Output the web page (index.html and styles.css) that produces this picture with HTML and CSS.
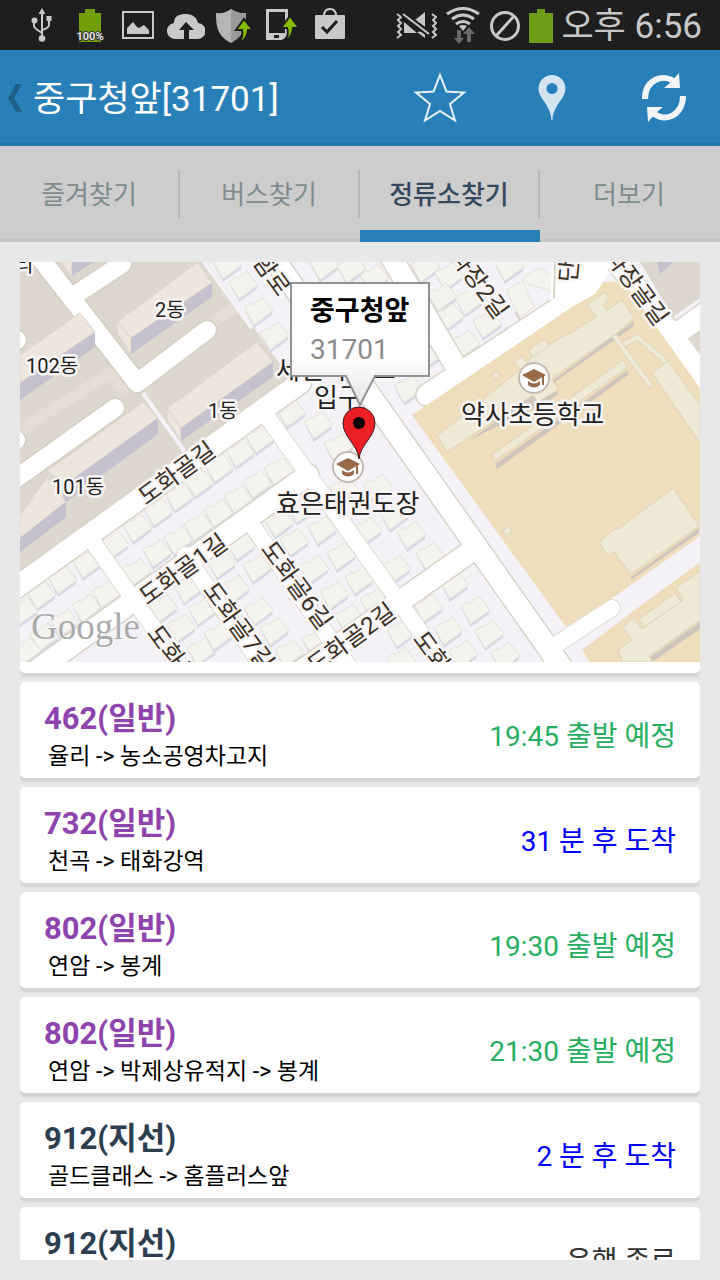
FILE: index.html
```html
<!DOCTYPE html>
<html lang="ko">
<head>
  <meta charset="UTF-8" />
  <meta name="viewport" content="width=device-width, initial-scale=1" />
  <title>중구청앞[31701]</title>
  <link rel="stylesheet" href="styles.css">
</head>
<body>
  <div class="statusbar">
    <div class="status-icons">
      <svg width="24" height="36" viewBox="0 0 24 36" fill="none" stroke="#c8c8c8" stroke-width="2">
        <path d="M12 5v26M4 14v5q0 2 8 7M19 12v6q0 3-7 5" />
        <path d="M12 1l3.500 6h-7zM16.500 9h5v5h-5z" fill="#c8c8c8" stroke="none" />
        <circle cx="4.500" cy="13.500" r="3" fill="#c8c8c8" stroke="none" />
        <circle cx="12" cy="31.500" r="3.300" fill="#c8c8c8" stroke="none" />
      </svg>
      <svg width="28" height="36" viewBox="0 0 28 36">
        <path d="M3 6h6V2h10v4h6v29H3z" fill="#709f09" />
        <text x="14" y="33" class="battery-text">100%</text>
      </svg>
      <svg width="32" height="36" viewBox="0 0 32 36">
        <rect x="1" y="5" width="30" height="26" fill="none" stroke="#c8c8c8" stroke-width="2" />
        <path d="M5 27v-6l6-6 4 5 2 1 5-3 5 5v4z" fill="#c8c8c8" />
      </svg>
      <svg width="38" height="36" viewBox="0 0 38 36">
        <path d="M9 32a8 8 0 0 1-2-16C7 9 12 7 19 7s11 4 12 9a8 8 0 0 1-1 16z" fill="#c8c8c8" />
        <path d="M19 15l8 8h-5v9h-5v-9h-5z" fill="#1e1e1e" />
      </svg>
      <svg width="38" height="38" viewBox="0 0 38 38">
        <path d="M16 3q7 5 15 4c0 16-3 23-15 30C3 30 1 22 1 7q9 1 15-4z" fill="#b5b5b5" />
        <path d="M16 3q7 5 15 4c0 16-3 23-15 30z" fill="#999" />
        <path d="M21 37q8-3 6-13h-6l8-11 9 11h-5q-1 12-12 13z" fill="#84bd00" stroke="#1e1e1e" stroke-width="2" />
      </svg>
      <svg width="34" height="36" viewBox="0 0 34 36">
        <path d="M1 2h22v31H1zM4 5v21h16V5zM9 28v3h5v-3z" fill="#c8c8c8" fill-rule="evenodd" />
        <path d="M17 34q8-3 5-13h-6l9-12 9 12h-6q-1 12-11 13z" fill="#84bd00" stroke="#1e1e1e" stroke-width="2" />
      </svg>
      <svg width="32" height="36" viewBox="0 0 32 36">
        <path d="M10 9q0-7 6-7t6 7" fill="none" stroke="#c8c8c8" stroke-width="2" />
        <rect x="1" y="8" width="30" height="24" rx="1" fill="#c8c8c8" />
        <path d="M8 20l5 5 10-11" fill="none" stroke="#1e1e1e" stroke-width="3" />
      </svg>
    </div>
    <div class="status-right">
      <svg width="42" height="36" viewBox="0 0 42 36" fill="none" stroke="#c8c8c8" stroke-width="2">
        <path d="M2 7l4 3-3 3 3 3-3 3 3 3-3 3 3 3-4 3M37 7l4 3-3 3 3 3-3 3 3 3-3 3 3 3-4 3" />
        <path d="M9 15l13 11H9zM20 13l10-8v15zM22 25l8-1v7z" fill="#c8c8c8" stroke="none" />
        <path d="M8 7l26 20" stroke="#1e1e1e" stroke-width="6" />
        <path d="M8 7l26 20" />
      </svg>
      <svg width="36" height="38" viewBox="0 0 36 38" fill="none" stroke="#c8c8c8" stroke-width="3">
        <path d="M2 8q16-11 32 0M7 13q11-8 22 0M11 18q7-5 14 0" />
        <path d="M14 20q4-2 8 0l-4 5z" fill="#c8c8c8" stroke="none" />
        <path d="M14 24v11M24 36V26" stroke="#6a6a6a" stroke-width="4" />
        <path d="M9 32h10l-5 6zM18 28h12l-6-7z" fill="#6a6a6a" stroke="none" />
      </svg>
      <svg width="32" height="36" viewBox="0 0 32 36" fill="none" stroke="#c8c8c8" stroke-width="3">
        <circle cx="16" cy="19" r="13.500" />
        <path d="M25 9L7 29" />
      </svg>
      <svg width="24" height="36" viewBox="0 0 24 36">
        <path d="M0 6h8V2h8v4h8v31H0z" fill="#6d9c17" />
      </svg>
      <span class="clock">오후 6:56</span>
    </div>
  </div>

  <header class="topbar">
    <button class="back" type="button" aria-label="뒤로">
      <svg width="14" height="28" viewBox="0 0 14 28"><path d="M8 0h6L6 14l8 14H8L0 14z" fill="#205e8a" /></svg>
    </button>
    <h1>중구청앞[31701]</h1>
    <button class="action" type="button" aria-label="즐겨찾기 추가">
      <svg width="56" height="56" viewBox="0 0 56 56">
        <path d="M28 5l6.500 16.500 17.500 1-14 11.500 5 16.500-15-9.500-15 9.500 5-16.500L4 22.500l17.500-1z" fill="none" stroke="#eaf2f8" stroke-width="2" />
      </svg>
    </button>
    <button class="action" type="button" aria-label="지도">
      <svg width="28" height="46" viewBox="0 0 28 46">
        <path d="M14 0a13.500 13.500 0 0 1 13.500 13.500C27.500 24 15 30 14.500 45h-1C13 30 .5 24 .5 13.500A13.500 13.500 0 0 1 14 0zm0 8a5.500 5.500 0 1 0 0 11 5.500 5.500 0 0 0 0-11z" fill="#d4e5f1" fill-rule="evenodd" />
      </svg>
    </button>
    <button class="action" type="button" aria-label="새로고침">
      <svg width="46" height="50" viewBox="0 0 46 50">
        <path d="M4 26C4 7 22-1 35 10M42 23C42 42 24 51 11 39" fill="none" stroke="#f2f4f6" stroke-width="6" />
        <path d="M38 0l1 15-16 0 6-5zM7 49L6 34l16 0-6 5z" fill="#f2f4f6" />
      </svg>
    </button>
  </header>

  <nav class="tabs">
    <a href="#">즐겨찾기</a>
    <a href="#">버스찾기</a>
    <a href="#" class="active">정류소찾기</a>
    <a href="#">더보기</a>
  </nav>

  <main class="content">
    <div class="map-card">
      <svg class="map" viewBox="20 262 680 400">
        <defs>
          <g id="house">
            <path d="M-12 1l9 17 18-13v-5z" fill="#d6d9e6" />
            <path d="M-13-2L-6-7-5-5 5-13 16 1-3 15z" fill="#f5f3ee" stroke="#e4e1d9" />
          </g>
          <g id="roads">
            <path d="M10 592L300 383M276 262L565 672M40 668L308 475M470 552L300 672" />
            <path d="M427 395L580 294M390 255L455 365M608 250L715 392M676 334L710 310" />
          </g>
          <g id="lanes">
            <path d="M268 418L452 676M90 538L186 674M185 555L268 674M250 522L355 676" />
            <path d="M554 646L612 608" />
          </g>
          <g id="paths">
            <path d="M38 255L137 383L207 330M78 293L122 264M115 408L14 480M10 340h7M10 440h6" />
          </g>
          <g id="school">
            <circle r="15" fill="#fff" stroke="#c4b8b4" stroke-width="2" />
            <path d="M0-9L12-3 0 4-12-3z" fill="#976a49" />
            <path d="M-6 3q6 5 12 0v4q-6 5-12 0zM8-2h2v9H8z" fill="#976a49" />
          </g>
          <linearGradient id="bubble" x1="0" y1="0" x2="0" y2="1">
            <stop offset="0.600" stop-color="#fff" />
            <stop offset="1" stop-color="#e4e4e4" />
          </linearGradient>
        </defs>
        <rect x="20" y="262" width="680" height="400" fill="#f5f2f7" />

        <!-- apartment blocks -->
        <path d="M20 262h187l83 116L20 572z" fill="#ddd7ce" />
        <path d="M20 430L112 372l14 22M212 322l22-14" fill="none" stroke="#e5ddd4" stroke-width="11" />
        <use href="#paths" class="path-edge" />
        <use href="#paths" class="path-fill" />
        <path d="M143 393L185 452M204 262l48 66" stroke="#f5f2f7" stroke-width="4" />
        <g class="roof">
          <path d="M117 322l81-60 14 21-81 55z" />
          <path d="M117 322l14 16v16l-14-21z" />
          <path d="M20 355l60-42 15 19-75 51z" />
          <path d="M167 408l90-66 16 20-92 66z" />
          <path d="M167 408l14 20v13l-14-21z" />
          <path d="M47 471l96-69 15 16-91 67z" />
          <path d="M20 515l27-38 19 25-46 36z" />
          <path d="M60 262l12 14v-14z" />
        </g>
        <g fill="#c5c1cf">
          <path d="M131 338l81-55v14l-81 57z" />
          <path d="M20 383l75-51v15l-75 53z" />
          <path d="M181 428l92-66v15l-92 64z" />
          <path d="M60 488l98-70v16l-92 68z" />
          <path d="M20 538l46-36v15l-46 35z" />
          <path d="M72 262h22l-22 14z" />
        </g>
        <path d="M640 262h60v36l-27 19z" fill="#ddd7ce" />
        <path d="M657 262h17l-14 12z" fill="#c5c1cf" />
        <path d="M685 332l15-11v31z" fill="#ddd7ce" />

        <!-- houses -->
        <use href="#house" x="113" y="544" /><use href="#house" x="136" y="527" /><use href="#house" x="157" y="511" />
        <use href="#house" x="178" y="496" /><use href="#house" x="198" y="482" /><use href="#house" x="218" y="467" />
        <use href="#house" x="239" y="452" /><use href="#house" x="259" y="438" />
        <use href="#house" x="135" y="571" /><use href="#house" x="156" y="552" /><use href="#house" x="177" y="539" />
        <use href="#house" x="197" y="526" /><use href="#house" x="217" y="512" /><use href="#house" x="237" y="498" />
        <use href="#house" x="256" y="483" /><use href="#house" x="277" y="470" />
        <use href="#house" x="86" y="563" /><use href="#house" x="61" y="579" /><use href="#house" x="40" y="594" />
        <use href="#house" x="22" y="610" /><use href="#house" x="105" y="593" /><use href="#house" x="85" y="607" />
        <use href="#house" x="63" y="622" /><use href="#house" x="43" y="636" /><use href="#house" x="25" y="650" />
        <use href="#house" x="162" y="607" /><use href="#house" x="180" y="627" /><use href="#house" x="200" y="650" />
        <use href="#house" x="187" y="588" /><use href="#house" x="201" y="610" /><use href="#house" x="217" y="635" />
        <use href="#house" x="220" y="563" /><use href="#house" x="240" y="545" /><use href="#house" x="234" y="588" />
        <use href="#house" x="256" y="567" /><use href="#house" x="257" y="610" /><use href="#house" x="273" y="630" />
        <use href="#house" x="288" y="652" />
        <use href="#house" x="278" y="522" /><use href="#house" x="293" y="541" /><use href="#house" x="300" y="508" />
        <use href="#house" x="321" y="529" /><use href="#house" x="340" y="555" /><use href="#house" x="313" y="568" />
        <use href="#house" x="358" y="579" /><use href="#house" x="333" y="594" /><use href="#house" x="373" y="601" />
        <use href="#house" x="348" y="617" /><use href="#house" x="315" y="641" />
        <use href="#house" x="290" y="412" /><use href="#house" x="317" y="424" /><use href="#house" x="337" y="446" />
        <use href="#house" x="377" y="487" /><use href="#house" x="343" y="489" /><use href="#house" x="366" y="530" />
        <use href="#house" x="393" y="515" /><use href="#house" x="410" y="534" /><use href="#house" x="429" y="555" />
        <use href="#house" x="395" y="568" />
        <use href="#house" x="453" y="584" /><use href="#house" x="427" y="607" /><use href="#house" x="447" y="630" />
        <use href="#house" x="474" y="609" /><use href="#house" x="488" y="633" /><use href="#house" x="504" y="655" />
        <use href="#house" x="462" y="653" /><use href="#house" x="400" y="632" /><use href="#house" x="400" y="660" />
        <use href="#house" x="226" y="264" /><use href="#house" x="242" y="284" /><use href="#house" x="257" y="310" />
        <use href="#house" x="273" y="335" />
        <use href="#house" x="323" y="265" /><use href="#house" x="350" y="268" /><use href="#house" x="373" y="277" />
        <use href="#house" x="407" y="388" /><use href="#house" x="430" y="352" />
        <use href="#house" x="424" y="267" /><use href="#house" x="448" y="275" /><use href="#house" x="441" y="296" />
        <use href="#house" x="448" y="316" /><use href="#house" x="468" y="300" /><use href="#house" x="486" y="323" />
        <use href="#house" x="464" y="343" />
        <path d="M506 290l17-9 8 20 4 5-15 12z" fill="#f5f3ee" stroke="#e4e1d9" />
        <path d="M523 278l16-10 14 8v15l-23-6z" fill="#f5f3ee" stroke="#e4e1d9" />
        <use href="#house" x="508" y="266" />

        <use href="#lanes" class="lane-edge" />
        <use href="#roads" class="road-edge" />
        <path d="M552 262l-2 44-35 23 30 12 53-42 13-37z" fill="#fff" />
        <path d="M555 262l-1 37-33 22-6-9" fill="none" stroke="#d9d4c8" stroke-width="2" />
        <use href="#lanes" class="lane-fill" />
        <use href="#roads" class="road-fill" />

        <!-- school grounds -->
        <path d="M412 415L572 307 595 294 603 282h15l12 8 70 98v148l-86 61-48 30z" fill="#efdebb" />
        <path d="M582 650l50-38 68-50v100H590z" fill="#efdebb" />
        <g class="school-shadow">
          <path d="M470 440L552 381 558 395 538 406zM552 381L634 321v5L552 384zM495 464L628 370v5L497 469zM631 577L699 528v5L631 580zM649 658L700 622v7L652 662z" />
        </g>
        <g class="school-wall">
          <path d="M437 436L470 410 517 372 537 352 597 317 587 305 605 292 609 298 603 305 607 310 622 300 634 318 617 333 552 378 558 390 538 402 533 395 447 452z" />
          <path d="M492 455L623 360 628 367 495 461z" />
          <path d="M528 350l17-11 4 7-16 11zM514 362l8-6 6 8-7 5zM492 374l5-3 3 5-5 4z" />
          <path d="M612 337l4-3 37 51-4 3z" />
          <path d="M625 347l-3-5 16-8 31 27-3 4-29-25z" />
          <path d="M652 373l16-12 32 44v38z" />
          <path d="M599 542l17-14 2 1 55-41 26 38-68 48-17-22-6 4z" />
          <path d="M676 588l24-17v49l-51 36 4 6h-30l-5-12 14-10-9-13 10-9 9 11 41-29z" />
          <path d="M639 619l36-26 6 9-37 25zM503 530l6-3 3 4-7 5z" />
        </g>

        <g class="place">
          <text x="155" y="317" class="block">2동</text>
          <text x="26" y="373" class="block">102동</text>
          <text x="208" y="418" class="block">1동</text>
          <text x="52" y="494" class="block">101동</text>
          <text x="15" y="272" class="block">리</text>
          <text x="276" y="379" class="spot">세인하이츠</text>
          <text x="314" y="407" class="spot">입구</text>
          <text x="461" y="424" class="spot">약사초등학교</text>
          <text x="276" y="513" class="spot">효은태권도장</text>
        </g>
        <g class="street">
          <text transform="translate(146 506) rotate(-36)">도화골길</text>
          <text transform="translate(147 606) rotate(-36)">도화골1길</text>
          <text transform="translate(202 590) rotate(54)">도화골7길</text>
          <text transform="translate(260 549) rotate(54)">도화골6길</text>
          <text transform="translate(315 675) rotate(-36)">도화골2길</text>
          <text transform="translate(146 633) rotate(54)">도화골8길</text>
          <text transform="translate(412 639) rotate(54)">도화골5길</text>
          <text transform="translate(252 262) rotate(54)">함로</text>
          <text transform="translate(449 256) rotate(54)">과장2길</text>
          <text transform="translate(604 256) rotate(54)">과장골길</text>
          <text transform="translate(576 283) rotate(-84)">단</text>
        </g>
        <text x="31" y="639" class="google">Google</text>

        <use href="#school" x="534" y="378" />
        <use href="#school" x="348" y="467" />

        <!-- stop marker and its bubble -->
        <path d="M359 459c-1-14-16-22-16-36a16 16 0 0 1 32 0c0 14-15 22-16 36z" fill="#ec1f26" stroke="#3a1a1a" />
        <circle cx="359" cy="423" r="6" fill="#000" />
        <path d="M291 283h138v93h-54l-15 29-14-29h-55z" fill="url(#bubble)" stroke="#929292" stroke-width="2" />
        <text x="310" y="320" class="bubble-title">중구청앞</text>
        <text x="310" y="359" class="bubble-code">31701</text>
      </svg>
    </div>

    <ul class="bus-list">
      <li class="bus">
        <div class="route">
          <h2>462(일반)</h2>
          <p>율리 -&gt; 농소공영차고지</p>
        </div>
        <span class="arrival planned">19:45 출발 예정</span>
      </li>
      <li class="bus">
        <div class="route">
          <h2>732(일반)</h2>
          <p>천곡 -&gt; 태화강역</p>
        </div>
        <span class="arrival soon">31 분 후 도착</span>
      </li>
      <li class="bus">
        <div class="route">
          <h2>802(일반)</h2>
          <p>연암 -&gt; 봉계</p>
        </div>
        <span class="arrival planned">19:30 출발 예정</span>
      </li>
      <li class="bus">
        <div class="route">
          <h2>802(일반)</h2>
          <p>연암 -&gt; 박제상유적지 -&gt; 봉계</p>
        </div>
        <span class="arrival planned">21:30 출발 예정</span>
      </li>
      <li class="bus branch">
        <div class="route">
          <h2>912(지선)</h2>
          <p>골드클래스 -&gt; 홈플러스앞</p>
        </div>
        <span class="arrival soon">2 분 후 도착</span>
      </li>
      <li class="bus branch">
        <div class="route">
          <h2>912(지선)</h2>
          <p>홈플러스앞 -&gt; 골드클래스</p>
        </div>
        <span class="arrival">운행 종료</span>
      </li>
    </ul>
  </main>
</body>
</html>
```
FILE: styles.css
```css
* {
  box-sizing: border-box;
}
body {
  margin: 0;
  height: 100vh;
  display: flex;
  flex-direction: column;
  overflow: hidden;
  background: #e8e8e8;
  color: #333;
  font-family: Roboto, "Noto Sans CJK KR", sans-serif;
}
h1, h2, p, ul {
  margin: 0;
  padding: 0;
}
button {
  border: 0;
  padding: 0;
  background: none;
  cursor: pointer;
}
svg {
  display: block;
}

/* status bar */
.statusbar {
  flex: none;
  height: 50px;
  padding: 0 18px;
  display: flex;
  align-items: center;
  justify-content: space-between;
  background: #1e1e1e;
  color: #c8c8c8;
}
.status-icons {
  display: grid;
  grid-template-columns: repeat(7, 48px);
  align-items: center;
  justify-items: center;
}
.status-right {
  display: flex;
  align-items: center;
  gap: 8px;
}
.battery-text {
  font-size: 11px;
  font-weight: bold;
  text-anchor: middle;
  fill: #e0e0e0;
  stroke: #333;
  stroke-width: 2px;
  paint-order: stroke;
}
.clock {
  padding-top: 4px;
  font-size: 35px;
  line-height: 46px;
}

/* title bar */
.topbar {
  flex: none;
  height: 96px;
  display: flex;
  align-items: center;
  background: #2980b9;
  box-shadow: inset 0 -3px #2574a9;
}
.back {
  width: 33px;
  padding-left: 8px;
}
.topbar h1 {
  flex: 1;
  padding-top: 4px;
  color: #fff;
  font-size: 35px;
  font-weight: normal;
  line-height: 48px;
}
.action {
  width: 112px;
  height: 96px;
  display: flex;
  align-items: center;
  justify-content: center;
}

/* tabs */
.tabs {
  flex: none;
  height: 96px;
  display: flex;
  background: #cdcdcd;
  box-shadow: inset 0 -3px #c3c3c3;
}
.tabs a {
  flex: 1;
  display: flex;
  align-items: center;
  justify-content: center;
  position: relative;
  padding: 0 2px 3px 0;
  color: #7f8c8d;
  font-size: 26px;
  text-decoration: none;
}
.tabs a + a::before {
  content: "";
  position: absolute;
  left: -2px;
  top: 24px;
  width: 2px;
  height: 48px;
  background: #b8b8b8;
}
.tabs .active {
  color: #34495e;
  font-weight: 500;
  box-shadow: inset 0 -12px #2980b9;
}

/* map */
.content {
  flex: 1;
  min-height: 0;
  margin: 20px;
  overflow: hidden;
}
.map-card {
  padding-bottom: 11px;
  background: #fff;
  border-radius: 0 0 5px 5px;
  box-shadow: 0 4px 2px #d4d4d4;
}
.map {
  width: 100%;
  height: auto;
}
.roof {
  fill: #eee6dd;
  stroke: #ddd3c8;
}
.path-edge, .path-fill {
  fill: none;
  stroke: #d5cfc2;
  stroke-width: 21px;
  stroke-linecap: round;
  stroke-linejoin: round;
}
.path-fill {
  stroke: #fff;
  stroke-width: 18px;
}
.road-edge, .road-fill {
  fill: none;
  stroke: #d9d4c8;
  stroke-width: 24px;
  stroke-linecap: round;
}
.road-fill {
  stroke: #fff;
  stroke-width: 21px;
}
.lane-edge, .lane-fill {
  fill: none;
  stroke: #dedad0;
  stroke-width: 18px;
  stroke-linecap: round;
}
.lane-fill {
  stroke: #fff;
  stroke-width: 16px;
}
.school-shadow {
  fill: #cfc5bf;
}
.school-wall {
  fill: #efead6;
  stroke: #dcd3bd;
}
.place text, .street text {
  fill: #222;
  stroke: #f8f5f5;
  stroke-width: 5px;
  stroke-linejoin: round;
  paint-order: stroke;
}
.place .block {
  font-size: 20px;
}
.place .spot {
  font-size: 26px;
}
.street text {
  fill: #3a3026;
  font-size: 24px;
}
.google {
  font-family: "Liberation Serif", serif;
  font-size: 37px;
  fill: #aaa;
  stroke: #fff;
  stroke-width: 1px;
  paint-order: stroke;
}
.bubble-title {
  font-size: 27px;
  font-weight: bold;
  fill: #000;
}
.bubble-code {
  font-size: 28px;
  fill: #8c8c8c;
}

/* bus list */
.bus-list {
  list-style: none;
  padding-top: 9px;
}
.bus {
  display: flex;
  align-items: center;
  justify-content: space-between;
  margin-bottom: 9px;
  padding: 17px 24px 3px;
  background: #fff;
  border-radius: 5px;
  box-shadow: 0 4px 2px #d4d4d4;
}
.bus h2 {
  color: #8e44ad;
  font-size: 31px;
  line-height: 40px;
}
.bus.branch h2 {
  color: #2c3e50;
}
.bus p {
  padding-left: 4px;
  color: #000;
  font-size: 23px;
  line-height: 36px;
}
.arrival {
  font-size: 28px;
  line-height: 40px;
}
.planned {
  color: #27ae60;
}
.soon {
  color: #0000ff;
}
```
